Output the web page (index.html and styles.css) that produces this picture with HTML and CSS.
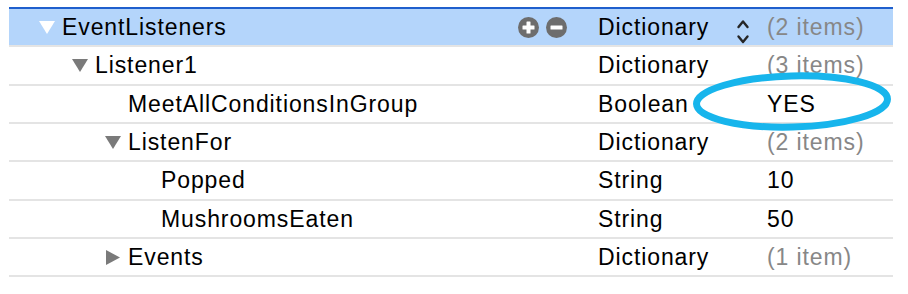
FILE: index.html
```html
<!DOCTYPE html>
<html>
<head>
<meta charset="utf-8">
<link rel="stylesheet" href="styles.css">
</head>
<body>
<div class="outline">
  <div class="row selected">
    <div class="key lvl0">
      <span class="disc"><svg class="tri-down white" width="16" height="13" viewBox="0 0 16 13"><polygon points="0,0 16,0 8,13"/></svg></span>
      <span class="name">EventListeners</span>
      <span class="actions">
        <svg width="21" height="21" viewBox="0 0 21 21"><circle cx="10.5" cy="10.5" r="10.5" fill="#6d6d6d"/><rect x="4.5" y="8.5" width="12" height="4" rx="0.5" fill="#fff"/><rect x="8.5" y="4.5" width="4" height="12" rx="0.5" fill="#fff"/></svg>
        <svg width="21" height="21" viewBox="0 0 21 21"><circle cx="10.5" cy="10.5" r="10.5" fill="#6d6d6d"/><rect x="4.5" y="8.5" width="12" height="4" rx="0.5" fill="#fff"/></svg>
      </span>
    </div>
    <div class="type">Dictionary
      <svg class="stepper" width="14" height="36" viewBox="0 0 14 36"><polyline points="2.5,18 7,12.5 11.5,18"/><polyline points="2.5,27.5 7,33 11.5,27.5"/></svg>
    </div>
    <div class="value muted">(2 items)</div>
  </div>
  <div class="row">
    <div class="key lvl1">
      <span class="disc"><svg class="tri-down" width="16" height="13" viewBox="0 0 16 13"><polygon points="0,0 16,0 8,13"/></svg></span>
      <span class="name">Listener1</span>
    </div>
    <div class="type">Dictionary</div>
    <div class="value muted">(3 items)</div>
  </div>
  <div class="row">
    <div class="key lvl2">
      <span class="disc"></span>
      <span class="name">MeetAllConditionsInGroup</span>
    </div>
    <div class="type">Boolean</div>
    <div class="value">YES</div>
  </div>
  <div class="row">
    <div class="key lvl2">
      <span class="disc"><svg class="tri-down" width="16" height="13" viewBox="0 0 16 13"><polygon points="0,0 16,0 8,13"/></svg></span>
      <span class="name">ListenFor</span>
    </div>
    <div class="type">Dictionary</div>
    <div class="value muted">(2 items)</div>
  </div>
  <div class="row">
    <div class="key lvl3">
      <span class="disc"></span>
      <span class="name">Popped</span>
    </div>
    <div class="type">String</div>
    <div class="value">10</div>
  </div>
  <div class="row">
    <div class="key lvl3">
      <span class="disc"></span>
      <span class="name">MushroomsEaten</span>
    </div>
    <div class="type">String</div>
    <div class="value">50</div>
  </div>
  <div class="row">
    <div class="key lvl2">
      <span class="disc"><svg class="tri-right" width="16" height="15" viewBox="0 0 16 15"><polygon points="1,0 15,7.5 1,15"/></svg></span>
      <span class="name">Events</span>
    </div>
    <div class="type">Dictionary</div>
    <div class="value muted">(1 item)</div>
  </div>
</div>
<svg class="annotation" width="908" height="294" viewBox="0 0 908 294">
  <ellipse cx="792" cy="101.5" rx="95.5" ry="25.5" transform="rotate(-1.5 792 101.5)"/>
</svg>
</body>
</html>
```
FILE: styles.css
```css
html, body {
  margin: 0;
  padding: 0;
  background: #ffffff;
}
body {
  width: 908px;
  height: 294px;
  overflow: hidden;
  position: relative;
  font-family: "Liberation Sans", Arial, sans-serif;
  font-size: 23px;
  letter-spacing: 0.9px;
  color: #000000;
}
.outline {
  margin: 7px 15px 0 9px;
  border-top: 2px solid #1f5fcd;
}
.row {
  display: grid;
  grid-template-columns: 589px 169px 1fr;
  height: 38.33px;
  box-sizing: border-box;
  border-bottom: 2px solid #e4e4e4;
  line-height: 36px;
}
.row.selected {
  background: #b4d5fb;
}
.key {
  display: flex;
  align-items: center;
  white-space: nowrap;
}
.lvl0 { padding-left: 30px; }
.lvl1 { padding-left: 63px; }
.lvl2 { padding-left: 96px; }
.lvl3 { padding-left: 129px; }
.disc {
  width: 16px;
  margin-right: 7px;
  display: flex;
  align-items: center;
  flex: none;
}
.disc svg { display: block; }
.tri-down polygon, .tri-right polygon { fill: #7a7a7a; }
.tri-down.white polygon { fill: #ffffff; }
.actions {
  margin-left: auto;
  margin-right: 31px;
  display: flex;
  gap: 7px;
  align-items: center;
}
.actions svg { display: block; }
.type {
  display: flex;
  align-items: stretch;
  white-space: nowrap;
}
.stepper {
  display: block;
  margin-left: auto;
  margin-right: 17px;
  align-self: flex-start;
}
.stepper polyline {
  fill: none;
  stroke: #262626;
  stroke-width: 2.4;
  stroke-linecap: round;
  stroke-linejoin: round;
}
.value {
  white-space: nowrap;
}
.muted {
  color: #878787;
}
.annotation {
  position: absolute;
  left: 0;
  top: 0;
  pointer-events: none;
}
.annotation ellipse {
  fill: none;
  stroke: #17b5ec;
  stroke-width: 7;
}
```
